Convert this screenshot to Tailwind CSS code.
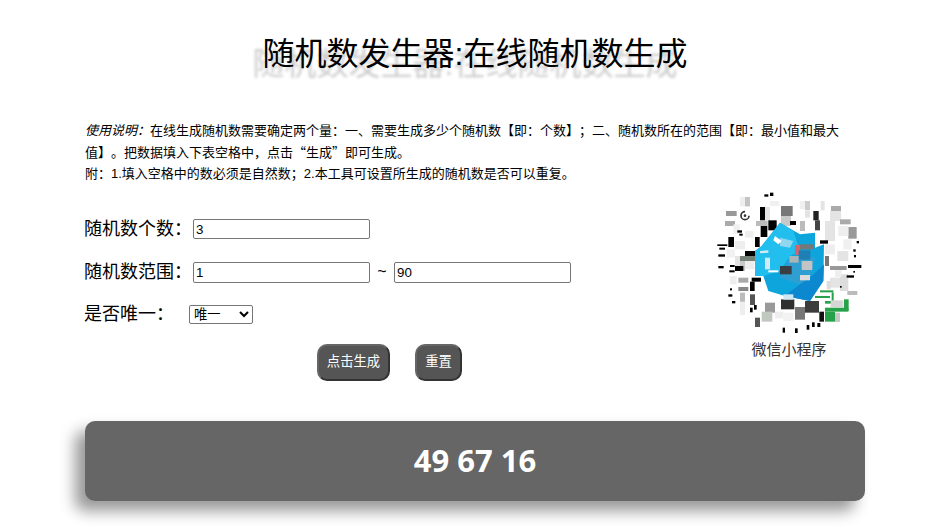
<!DOCTYPE html>
<html lang="zh">
<head>
<meta charset="utf-8">
<title>随机数发生器</title>
<script src="https://cdn.jsdelivr.net/npm/@tailwindcss/browser@4"></script>
</head>
<body class="bg-white text-black font-['Liberation_Sans','Noto_Sans_CJK_SC',sans-serif]">
<div class="ml-[85px] w-[780px] h-[526px] overflow-visible">
  <h1 class="pt-[31px] h-[120px] text-center text-[32px] leading-[46px] font-normal [text-shadow:-10px_10px_3px_#ccc]">随机数发生器:在线随机数生成</h1>
  <div class="text-[13px] leading-[21.5px] w-[770px] [text-spacing-trim:space-all]">
    <p><em>使用说明：</em>在线生成随机数需要确定两个量：一、需要生成多少个随机数【即：个数】；二、随机数所在的范围【即：最小值和最大值】。把数据填入下表空格中，点击<span class="leading-[0] font-['Noto_Sans_CJK_SC',sans-serif]">“生成”</span>即可生成。</p>
    <p>附：1.填入空格中的数必须是自然数；2.本工具可设置所生成的随机数是否可以重复。</p>
  </div>
  <div class="flex justify-between mt-[23px]">
    <form class="w-[620px]">
      <div class="flex items-center h-[43px]">
        <label class="w-[108px] text-[18px] leading-6 -ml-[1px] mr-[1px]">随机数个数：</label>
        <input value="3" class="w-[177px] h-[20px] border border-[#767676] rounded-[2px] px-[2px] text-[13.33px] bg-white">
      </div>
      <div class="flex items-center h-[43px]">
        <label class="w-[108px] text-[18px] leading-6 -ml-[1px] mr-[1px]">随机数范围：</label>
        <input value="1" class="w-[177px] h-[21px] border border-[#767676] rounded-[2px] px-[2px] text-[13.33px] bg-white">
        <span class="w-[24px] text-center text-[16px]">~</span>
        <input value="90" class="w-[177px] h-[21px] border border-[#767676] rounded-[2px] px-[2px] text-[13.33px] bg-white">
      </div>
      <div class="flex items-center h-[41px]">
        <label class="w-[104px] text-[18px] leading-6 -ml-[1px] mr-[1px]">是否唯一：</label>
        <select class="w-[64px] h-[19px] border border-[#767676] rounded-[2px] text-[13.33px] bg-white"><option>唯一</option></select>
      </div>
      <div class="flex gap-[25px] pl-[232px] pt-[9px]">
        <button type="button" class="w-[73px] h-[37px] bg-[#555] text-white text-[13.33px] rounded-[10px] border-2 border-t-[#666] border-l-[#666] border-r-[#333] border-b-[#333]">点击生成</button>
        <button type="button" class="w-[47px] h-[37px] bg-[#555] text-white text-[13.33px] rounded-[10px] border-2 border-t-[#666] border-l-[#666] border-r-[#333] border-b-[#333]">重置</button>
      </div>
    </form>
    <div class="w-[146px] mr-[2px] -mt-[17px] text-center">
      <svg viewBox="51 30 438 435" class="w-[146px] h-[145px] block" aria-label="微信小程序码">
        <g fill="#e4e4e4">
          <rect x="120" y="48" width="30" height="28" fill="#eee"/><rect x="135" y="48" width="15" height="28" fill="#c4c4c4"/><rect x="243" y="75" width="35" height="30" fill="#777"/><rect x="315" y="60" width="15" height="28" fill="#ccc"/><rect x="362" y="60" width="12" height="28"/>
          <rect x="393" y="75" width="30" height="15" fill="#aaa"/><rect x="78" y="90" width="32" height="15" fill="#999"/><rect x="75" y="120" width="30" height="15" fill="#aaa"/><rect x="195" y="78" width="15" height="42"/>
          <rect x="243" y="105" width="30" height="30" fill="#c8c8c8"/><rect x="390" y="90" width="33" height="30"/><rect x="420" y="115" width="32" height="15" fill="#aaa"/><rect x="445" y="138" width="25" height="35" fill="#999"/>
          <rect x="168" y="120" width="35" height="15" fill="#bbb"/><rect x="300" y="120" width="15" height="30" fill="#bbb"/><rect x="375" y="120" width="30" height="60"/><rect x="105" y="225" width="15" height="30"/>
          <rect x="120" y="225" width="45" height="15" fill="#748076"/><rect x="120" y="240" width="15" height="30" fill="#c8c8c8"/><rect x="375" y="225" width="12" height="30" fill="#777"/><rect x="412" y="210" width="33" height="30"/>
          <rect x="390" y="255" width="50" height="12" fill="#999"/><rect x="390" y="290" width="30" height="30"/><rect x="420" y="280" width="25" height="50" fill="#ddd"/><rect x="442" y="330" width="30" height="12" fill="#bbb"/>
          <rect x="115" y="290" width="30" height="15" fill="#aaa"/><rect x="115" y="318" width="30" height="12" fill="#888"/><rect x="120" y="335" width="15" height="30" fill="#bbb"/><rect x="150" y="340" width="15" height="32" fill="#555"/>
          <rect x="195" y="365" width="30" height="30" fill="#999"/><rect x="165" y="410" width="15" height="28" fill="#555"/><rect x="185" y="392" width="32" height="30" fill="#c0c8c0"/><rect x="285" y="378" width="30" height="38" fill="#777"/>
          <rect x="315" y="360" width="42" height="35" fill="#3c3c3c"/><rect x="243" y="355" width="40" height="30" fill="#2f2f2f"/><rect x="358" y="392" width="14" height="30" fill="#111"/><rect x="405" y="395" width="15" height="28" fill="#c8c8c8"/>
          <rect x="345" y="118" width="15" height="30" fill="#444"/><rect x="340" y="90" width="16" height="28" fill="#222"/><rect x="315" y="90" width="15" height="20"/><rect x="120" y="362" width="15" height="40" fill="#eee"/>
          <rect x="100" y="130" width="20" height="28" fill="#f0f0f0"/><rect x="135" y="150" width="25" height="20" fill="#eee"/><rect x="105" y="180" width="30" height="25" fill="#eee"/><rect x="80" y="205" width="25" height="25" fill="#f2f2f2"/>
          <rect x="135" y="240" width="28" height="25" fill="#ececec"/><rect x="90" y="285" width="20" height="25" fill="#eee"/><rect x="375" y="190" width="30" height="30" fill="#eee"/><rect x="430" y="175" width="25" height="30" fill="#f0f0f0"/>
          <rect x="380" y="300" width="12" height="25" fill="#ddd"/><rect x="405" y="268" width="20" height="20" fill="#eee"/><rect x="225" y="392" width="25" height="20" fill="#eee"/><rect x="250" y="395" width="30" height="25" fill="#f2f2f2"/>
          <rect x="300" y="60" width="15" height="25" fill="#f0f0f0"/><rect x="415" y="135" width="30" height="30" fill="#eee"/><rect x="210" y="60" width="28" height="15" fill="#f0f0f0"/>
        </g>
        <g fill="#000">
          <rect x="180" y="78" width="15" height="40"/><rect x="182" y="135" width="20" height="33"/><rect x="165" y="168" width="14" height="30"/><rect x="85" y="168" width="17" height="30"/>
          <rect x="135" y="210" width="30" height="15"/><rect x="105" y="255" width="25" height="15"/><rect x="205" y="118" width="25" height="30"/><rect x="155" y="290" width="28" height="12"/><rect x="150" y="302" width="14" height="28"/>
          <rect x="270" y="120" width="18" height="12"/><rect x="360" y="178" width="24" height="10"/>
          <rect x="52" y="190" width="30" height="5"/><rect x="444" y="252" width="40" height="9"/><rect x="440" y="283" width="22" height="7"/><rect x="210" y="35" width="10" height="10"/><rect x="193" y="40" width="12" height="7"/>
          <rect x="58" y="200" width="17" height="6"/><rect x="55" y="220" width="20" height="7"/><rect x="55" y="255" width="16" height="7"/><rect x="90" y="252" width="14" height="6"/><rect x="88" y="268" width="16" height="6"/>
          <rect x="90" y="322" width="6" height="6"/><rect x="85" y="340" width="12" height="7"/><rect x="96" y="360" width="10" height="7"/><rect x="150" y="380" width="8" height="14"/><rect x="162" y="372" width="8" height="14"/>
          <rect x="248" y="440" width="7" height="15"/><rect x="285" y="442" width="8" height="14"/><rect x="320" y="432" width="8" height="14"/><rect x="336" y="424" width="8" height="14"/><rect x="352" y="426" width="9" height="12"/>
          <rect x="112" y="148" width="14" height="7"/><rect x="118" y="158" width="10" height="6"/><rect x="460" y="205" width="7" height="7"/><rect x="462" y="222" width="6" height="7"/><rect x="470" y="180" width="7" height="7"/><rect x="420" y="315" width="5" height="5"/><rect x="460" y="270" width="5" height="5"/>
        </g>
        <circle cx="135" cy="104" r="12" fill="none" stroke="#333" stroke-width="5" stroke-dasharray="55 20"/><circle cx="135" cy="104" r="4" fill="#333"/>
        <g>
          <polygon points="240,125 300,160 345,155 345,200 372,190 370,300 330,360 255,345 205,330 190,285 165,285 165,210 185,195" fill="#0ea5dc"/>
          <polygon points="240,125 280,150 300,210 270,225 240,270 190,285 165,285 165,210 185,195" fill="#22bfee"/>
          <polygon points="270,225 345,230 330,290 300,310 240,290" fill="#2f9fd2"/>
          <polygon points="300,310 330,290 372,250 370,300 330,360 255,345" fill="#0b88cf"/>
          <polygon points="240,170 280,180 270,200 240,195" fill="#8fd7ef"/>
          <polygon points="195,230 210,230 210,265 195,265" fill="#cfeaf5"/>
          <rect x="285" y="192" width="15" height="30" fill="#d9636b"/>
          <rect x="300" y="190" width="42" height="15" fill="#777"/>
          <rect x="296" y="208" width="35" height="28" fill="#1f7fb5"/>
          <rect x="240" y="255" width="35" height="25" fill="#3a3f44"/>
          <rect x="268" y="225" width="28" height="20" fill="#a9b4b8"/>
          <rect x="305" y="240" width="32" height="27" fill="#c4c4c4"/>
          <rect x="300" y="282" width="30" height="16" fill="#dcdcdc"/>
          <rect x="250" y="340" width="30" height="16" fill="#cfe7f3"/>
          <polygon points="225,165 245,180 235,190 220,178" fill="#fff"/>
          <polygon points="180,210 205,208 205,215 180,217" fill="#cfeaf5"/>
          <rect x="205" y="268" width="30" height="6" fill="#fff"/>
        </g>
        <g fill="#27a24a">
          <rect x="345" y="345" width="45" height="6"/><rect x="360" y="328" width="40" height="6"/><rect x="375" y="360" width="30" height="8"/><rect x="375" y="380" width="70" height="12"/>
          <rect x="375" y="392" width="30" height="30"/><rect x="432" y="355" width="14" height="35"/><rect x="395" y="334" width="6" height="30"/>
        </g>
        <rect x="392" y="358" width="38" height="20" fill="#d5d5d5"/>
      </svg>
      <div class="text-[15px] leading-[20px] text-[#333] mt-[4px] -ml-[2px]">微信小程序</div>
    </div>
  </div>
  <div class="mt-[40px] h-[80px] bg-[#666] rounded-[10px] shadow-[-10px_10px_15px_#999] flex items-center justify-center text-white text-[31px] font-bold font-['Open_Sans',sans-serif]">49 67 16</div>
</div>
</body>
</html>
